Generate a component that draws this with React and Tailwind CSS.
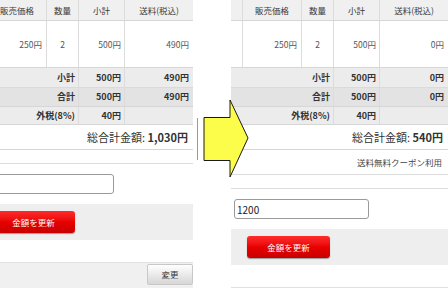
import React from "react";

const F = "font-['Noto_Sans_CJK_JP',sans-serif]";

function Panel({ ship, shipSum, total, coupon, input, showChange, className = "" }) {
  const cols = "grid grid-cols-[11px_59px_32px_46px_69px]";
  const sumCols = "grid grid-cols-[102px_46px_69px]";
  const bl = "border-l border-[#dcdcdc]";
  return (
    <div className={`w-[217px] shrink-0 block ${className}`}>
      <div className={`${cols} h-[21px] bg-[#f0f0f0] border-b border-[#d6d6d6] text-[8.5px] text-[#3a3a3a]`}>
        <div />
        <div className={`${bl} flex items-center justify-center`}>販売価格</div>
        <div className={`${bl} flex items-center justify-center`}>数量</div>
        <div className={`${bl} flex items-center justify-center`}>小計</div>
        <div className={`${bl} flex items-center justify-center`}>送料(税込)</div>
      </div>
      <div className={`${cols} h-[47px] border-b border-[#d6d6d6] text-[8.5px] text-[#555]`}>
        <div />
        <div className={`${bl} flex items-center justify-end pr-[4px]`}>250円</div>
        <div className={`${bl} flex items-center justify-center`}>2</div>
        <div className={`${bl} flex items-center justify-end pr-[3px]`}>500円</div>
        <div className={`${bl} flex items-center justify-end pr-[4px]`}>{ship}</div>
      </div>
      <div className={`${sumCols} h-[20px] bg-[#ececec] border-b border-[#dadada] text-[9px] font-bold text-[#333]`}>
        <div className="flex items-center justify-end pr-[3px]">小計</div>
        <div className={`${bl} flex items-center justify-end pr-[3px]`}>500円</div>
        <div className={`${bl} flex items-center justify-end pr-[4px]`}>{shipSum}</div>
      </div>
      <div className={`${sumCols} h-[19px] bg-[#e3e3e3] border-b border-[#d6d6d6] text-[9px] font-bold text-[#333]`}>
        <div className="flex items-center justify-end pr-[3px]">合計</div>
        <div className={`${bl} flex items-center justify-end pr-[3px]`}>500円</div>
        <div className={`${bl} flex items-center justify-end pr-[4px]`}>{shipSum}</div>
      </div>
      <div className={`${sumCols} h-[18px] bg-[#ececec] border-b border-[#d6d6d6] text-[9px] font-bold text-[#333]`}>
        <div className="flex items-center justify-end pr-[3px]">外税(8%)</div>
        <div className={`${bl} flex items-center justify-end pr-[3px]`}>40円</div>
        <div className={`${bl}`} />
      </div>
      <div className="h-[25px] border-b border-[#d6d6d6] flex items-center justify-end pr-[5px] text-[11px] text-[#333]">
        <span>総合計金額:&nbsp;</span>
        <span className="font-bold">{total}</span>
      </div>
      {coupon && (
        <div className="h-[25px] border-b border-[#dcdcdc] flex items-center justify-end pr-[6px] text-[8.5px] text-[#444]">
          送料無料クーポン利用
        </div>
      )}
      <div className="h-[14px] border-b border-[#dcdcdc]" />
      <div className="pl-[3px] mt-[10px]">
        <div className="w-[135px] h-[20px] rounded-[3px] border border-[#9a9a9a] bg-white flex items-center pl-[2px] text-[10px] text-[#222]">
          {input}
        </div>
      </div>
      <div className="mt-[10px] h-[36px] bg-[#eeeeee] flex items-center pl-[16px]">
        <div className="w-[83px] h-[22px] rounded-[3px] bg-gradient-to-b from-[#ff2a2a] via-[#e80000] to-[#c80000] shadow-[0_1px_1px_rgba(0,0,0,0.35)] flex items-center justify-center text-[8.5px] text-white">
          金額を更新
        </div>
      </div>
      <div className="mt-[22px] h-[30px] border-t border-[#e0e0e0] bg-[#f0f0f0] flex justify-end pt-[1px]">
        {showChange && (
          <div className="w-[46px] h-[21px] rounded-[2px] border border-[#c8c8c8] bg-gradient-to-b from-[#ffffff] to-[#d6d6d6] flex items-center justify-center text-[8.5px] text-[#333]">
            変更
          </div>
        )}
      </div>
    </div>
  );
}

export default function App() {
  return (
    <div className={`${F} relative w-[448px] h-[288px] overflow-hidden bg-white flex items-start gap-[38px]`}>
      <Panel className="ml-[-24px]" ship="490円" shipSum="490円" total="1,030円" input="" showChange />
      <Panel ship="0円" shipSum="0円" total="540円" coupon input="1200" />
      <svg className="absolute left-0 top-0 pointer-events-none" width="448" height="288" viewBox="0 0 448 288">
        <line x1="197.5" y1="118" x2="197.5" y2="160" stroke="#9a9a9a" strokeWidth="1" />
        <polygon
          points="204,117.5 230,117.5 230,100 248,138 230,177 230,160.5 204,160.5"
          fill="#fcfc4a"
          stroke="#1a1a1a"
          strokeWidth="1"
          strokeLinejoin="miter"
        />
      </svg>
    </div>
  );
}
